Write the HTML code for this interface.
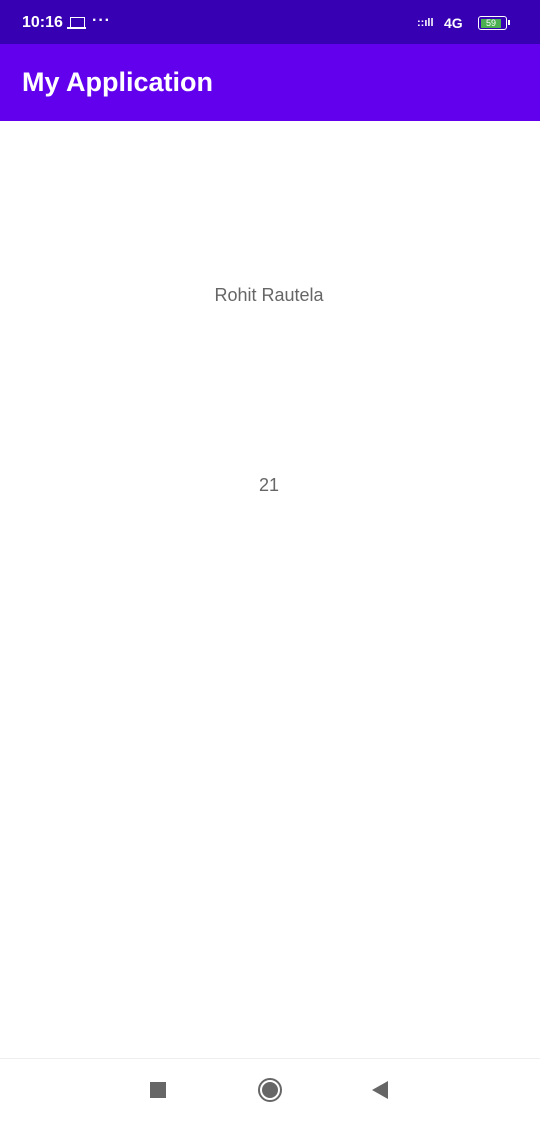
<!DOCTYPE html>
<html><head><style>
body{margin:0;width:540px;height:1123px;position:relative;background:#fff;font-family:"Liberation Sans",sans-serif;overflow:hidden}
.sb{position:absolute;top:0;left:0;width:540px;height:44px;background:#3700b3;color:#fff}
.ab{position:absolute;top:44px;left:0;width:540px;height:77px;background:#6200ee;color:#fff}
.t{position:absolute;font-size:18px;color:#666;left:0;width:538px;text-align:center}
</style></head><body>
<div class="sb">
<div style="position:absolute;left:22px;top:14px;font-size:16px;font-weight:bold">10:16</div>
<div style="position:absolute;left:70px;top:17px;width:13px;height:9px;border:1.5px solid #fff;border-bottom:none"></div>
<div style="position:absolute;left:67px;top:27px;width:19px;height:1.5px;background:#fff"></div>
<div style="position:absolute;left:92px;top:12px;font-size:16px;font-weight:bold;letter-spacing:1px">···</div>
<div style="position:absolute;left:417px;top:17px;font-size:11px;font-weight:bold">::ıll</div>
<div style="position:absolute;left:444px;top:15px;font-size:14px;font-weight:bold">4G</div>
<div style="position:absolute;left:478px;top:16px;width:27px;height:12px;border:1.5px solid #fff;border-radius:3px"></div>
<div style="position:absolute;left:481px;top:19px;width:20px;height:9px;background:#4caf50;font-size:9px;color:#fff;text-align:center;line-height:9px">59</div>
<div style="position:absolute;left:508px;top:20px;width:2px;height:5px;background:#fff"></div>
</div>
<div class="ab"><div style="position:absolute;left:22px;top:23px;font-size:27px;font-weight:bold">My Application</div></div>
<div class="t" style="top:285px">Rohit Rautela</div>
<div class="t" style="top:475px">21</div>
<div style="position:absolute;top:1058px;left:0;width:540px;height:1px;background:#eee"></div>
<div style="position:absolute;left:150px;top:1082px;width:16px;height:16px;background:#666"></div>
<div style="position:absolute;left:258px;top:1078px;width:20px;height:20px;border:2px solid #666;border-radius:50%"></div>
<div style="position:absolute;left:262px;top:1082px;width:16px;height:16px;background:#666;border-radius:50%"></div>
<div style="position:absolute;left:372px;top:1081px;width:0;height:0;border-top:9px solid transparent;border-bottom:9px solid transparent;border-right:16px solid #666"></div>
</body></html>
